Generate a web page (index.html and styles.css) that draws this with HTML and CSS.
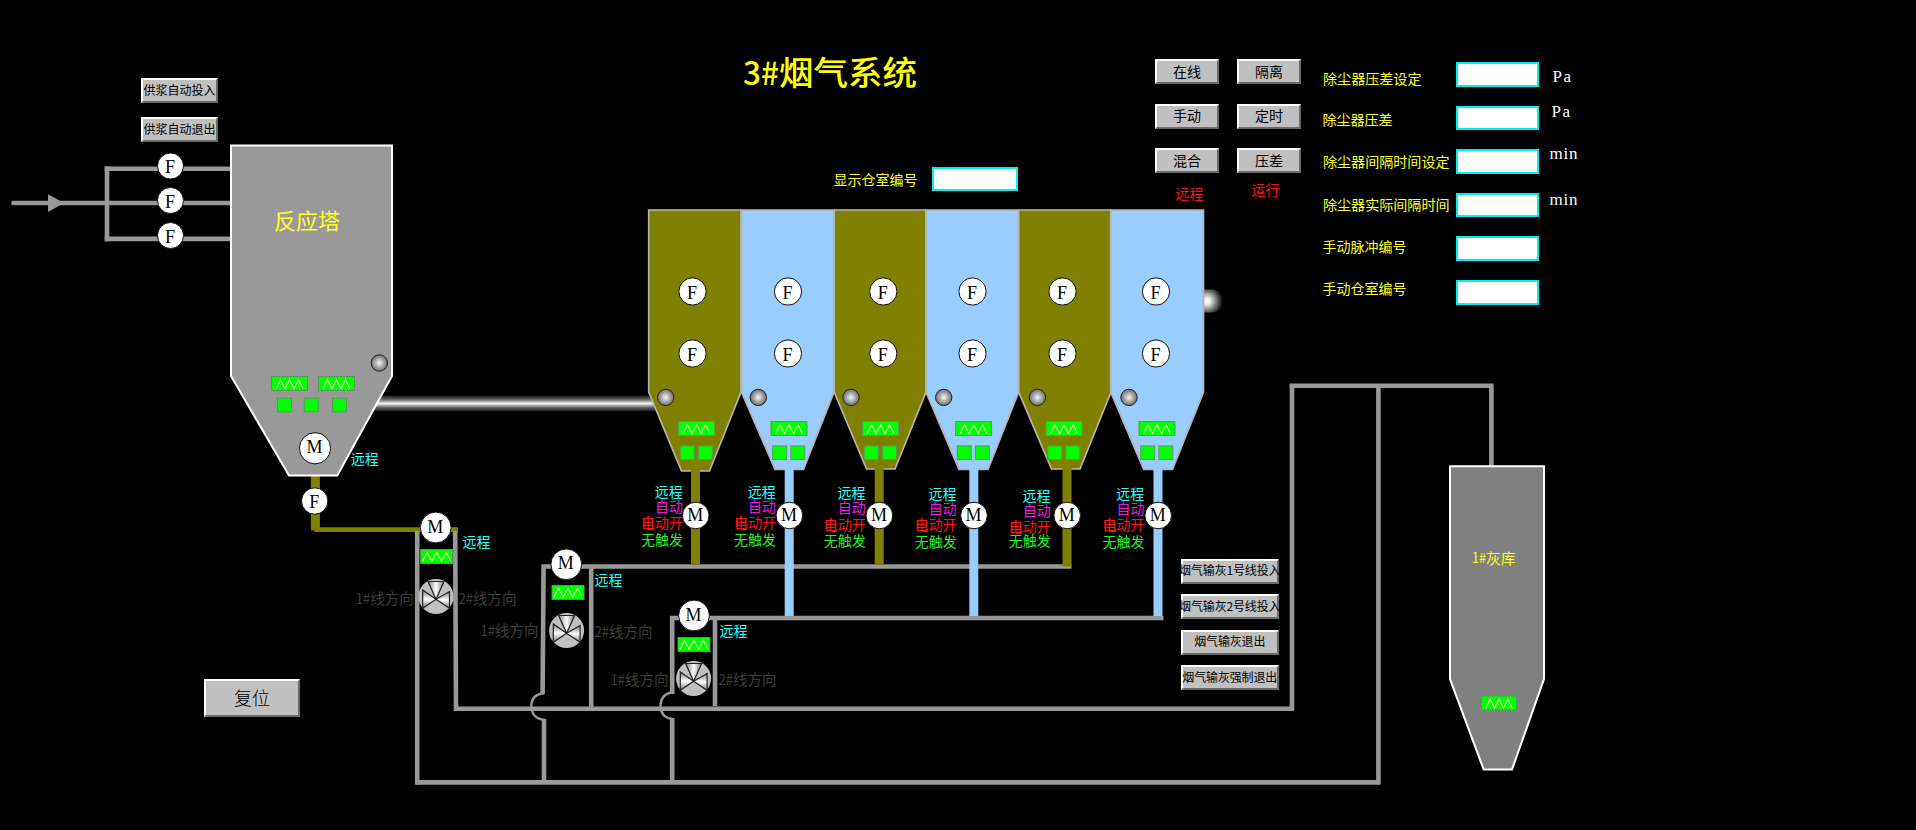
FILE: index.html
```
<!DOCTYPE html>
<html lang="zh-CN">
<head>
<meta charset="utf-8">
<title>3#烟气系统</title>
<link rel="stylesheet" href="styles.css">
</head>
<body>
<main class="mimic">
<svg class="diagram" viewBox="0 0 1916 830" width="1916" height="830">
  <defs>
    <linearGradient id="duct" x1="0" y1="0" x2="0" y2="1">
      <stop offset="0" stop-color="#111"/><stop offset=".25" stop-color="#666"/><stop offset=".5" stop-color="#f4f4f4"/><stop offset=".75" stop-color="#666"/><stop offset="1" stop-color="#111"/>
    </linearGradient>
    <radialGradient id="ball"><stop offset="0" stop-color="#f4f4f4"/><stop offset="1" stop-color="#6c6c6c"/></radialGradient>
    <radialGradient id="outlet" gradientUnits="userSpaceOnUse" cx="1207" cy="301" r="16">
      <stop offset="0" stop-color="#fff"/><stop offset=".2" stop-color="#eee"/><stop offset="1" stop-color="#000"/>
    </radialGradient>
    <linearGradient id="bladeH"><stop offset="0" stop-color="#777"/><stop offset=".5" stop-color="#fff"/><stop offset="1" stop-color="#777"/></linearGradient>
    <linearGradient id="bladeV" x1="0" y1="0" x2="0" y2="1"><stop offset="0" stop-color="#777"/><stop offset=".5" stop-color="#fff"/><stop offset="1" stop-color="#777"/></linearGradient>
    <g id="ballMark"><circle r="8.2" fill="url(#ball)" stroke="#222"/></g>
    <g id="wave"><rect x="-18" y="-7" width="36" height="14" class="lamp"/><path class="zig" d="M-13.5 5.2L-9 -3.8L-4.5 5.2L0 -3.8L4.5 5.2L9 -3.8L13.5 5.2"/></g>
    <g id="waveSmall"><rect x="-16" y="-7" width="32" height="14" class="lamp"/><path class="zig" d="M-14 4.5L-9.5 -4L-4.8 4.5L0 -4L4.8 4.5L9.5 -4L14 4.5"/></g>
    <g id="sq"><rect x="-7" y="-6.8" width="14" height="13.6" class="lamp"/></g>
    <g id="valve">
      <circle r="17.5" fill="#c0c0c0"/>
      <path d="M-8 -15H8L0 2.7Z" fill="url(#bladeH)" class="blade"/>
      <path d="M-13.3 -6.5V11.8L0 2.7Z" fill="url(#bladeV)" class="blade"/>
      <path d="M13.5 -5V11.8L0 2.7Z" fill="url(#bladeV)" class="blade"/>
    </g>
  </defs>

  <!-- slurry inlet -->
  <g class="pipe">
    <path d="M11.5 203H231M107 166.2V241.4M104.5 168.7H231M104.5 238.9H231"/>
  </g>
  <path d="M48 194.3L64 203L48 212Z" fill="#999"/>

  <!-- flue duct between tower and dust collector -->
  <rect x="365" y="395.5" width="300" height="16" fill="url(#duct)"/>

  <!-- ash conveying lines -->
  <g class="pipe olive"><path d="M314.500 529.6H458"/></g>
  <g class="pipe olive thick"><path d="M315.4 474V530.5"/></g>
  <g class="pipe">
    <path d="M417.2 531V784.4M455.2 531L456 710.8M454 708.8H1294"/>
    <path d="M541.5 566.5H1071.5M543.6 565L542.6 694M591.2 567V708M544 719V782M670 618H1163.5M672.2 616V694M715 618V706M672.2 718V782"/>
    <path d="M415.5 782.4H1380.6M1378.4 386V784.6M1289.5 385.7H1493.5M1292 384V710M1491.4 385V467"/>
  </g>
  <g class="hop"><path d="M544.5 693.3Q531.3 694 531.3 706.5Q532 719 544.5 719.7"/><path d="M672.7 692.3Q660.5 694 660.5 706.5Q661 718 673.5 719.2"/></g>

  <!-- reaction tower -->
  <path d="M231 145.5H392V376L337.3 475.6H289L231 376Z" fill="#999" stroke="#fff" stroke-width="2"/>
  <!-- ash silo -->
  <path d="M1450 466.2H1544V679L1512 769.6H1483.7L1450 679Z" fill="#808080" stroke="#fff" stroke-width="2"/>
  <!-- clean gas outlet -->
  <path d="M1203 289.5H1212Q1225 291 1225 301Q1225 311 1212 312.5H1203Z" fill="url(#outlet)"/>

  <g id="plant"></g>
</svg>

<button class="btn tiny feed-on">供浆自动投入</button>
<button class="btn tiny feed-off">供浆自动退出</button>
<button class="btn reset">复位</button>
<input class="field chamber" aria-label="显示仓室编号">

<section class="modes">
  <button class="btn">在线</button><button class="btn">隔离</button>
  <button class="btn">手动</button><button class="btn">定时</button>
  <button class="btn">混合</button><button class="btn">压差</button>
</section>

<section class="fields">
  <input class="field"><input class="field"><input class="field"><input class="field"><input class="field"><input class="field">
</section>

<section class="ash">
  <button class="btn tiny">烟气输灰1号线投入</button>
  <button class="btn tiny">烟气输灰2号线投入</button>
  <button class="btn tiny">烟气输灰退出</button>
  <button class="btn tiny">烟气输灰强制退出</button>
</section>
</main>
<script src="plant.js"></script>
</body>
</html>
```
FILE: styles.css
```
body {
  margin: 0;
  background: #000;
  overflow: hidden;
  font-family: "Noto Sans CJK SC", sans-serif;
}
.mimic { position: relative; width: 1916px; height: 830px; }
.diagram { display: block; }

.pipe { fill: none; stroke: #999; stroke-width: 4.6; }
.pipe.olive { stroke: #808000; }
.pipe.thick { stroke-width: 9; }
.hop { fill: none; stroke: #999; stroke-width: 2.4; }
.lamp { fill: #0f0; stroke: #5a9a5a; stroke-width: 1; }
.zig { fill: none; stroke: #d8ffb0; stroke-width: 1.1; }
.blade { stroke: #222; stroke-width: 1.2; }
.disc { fill: #fff; stroke: #111; stroke-width: 1; }
.letter { font-family: "Liberation Serif", serif; font-size: 18px; text-anchor: middle; fill: #000; }
.unit { font-family: "Liberation Serif", serif; font-size: 17px; fill: #fff; }
.cn { font-family: "Noto Sans CJK SC", sans-serif; font-weight: 400; }
.title { font-weight: 500; fill: #ff0; }
.yellow { fill: #ffff28; }
.cyan { fill: #2ff; }
.magenta { fill: #e81ee8; }
.red { fill: #ff1414; }
.green { fill: #28f028; }
.dim { fill: #3e3e3e; }

.btn {
  box-sizing: border-box;
  margin: 0;
  padding: 0 0 2px;
  border: 2px solid;
  border-color: #fff #6a6a6a #6a6a6a #fff;
  background: #c0c0c0;
  color: #000;
  font: 400 14px/1 "Noto Sans CJK SC", sans-serif;
  white-space: nowrap;
  display: flex;
  align-items: center;
  justify-content: center;
}
.tiny { font-size: 12px; }
.feed-on, .feed-off, .reset, .chamber { position: absolute; }
.feed-on, .feed-off { left: 141px; width: 77px; height: 25px; }
.feed-on { top: 78px; }
.feed-off { top: 117px; }
.reset { left: 204px; top: 679px; width: 96px; height: 38px; font-size: 18px; font-weight: 300; }

.field {
  box-sizing: border-box;
  width: 83px;
  height: 24.6px;
  margin: 0;
  padding: 0 4px;
  border: 2px solid #00f0f0;
  background: #fff;
}
.chamber { left: 932px; top: 167px; width: 86px; height: 24px; }

.modes, .fields, .ash { position: absolute; }
.modes {
  left: 1155px;
  top: 59px;
  display: grid;
  grid-template-columns: 64px 64px;
  grid-auto-rows: 25px;
  gap: 19.5px 18px;
}
.fields {
  left: 1456px;
  top: 62px;
  display: flex;
  flex-direction: column;
  gap: 19px;
}
.ash {
  left: 1181px;
  top: 558.5px;
  display: grid;
  grid-template-columns: 97.5px;
  grid-auto-rows: 25px;
  gap: 10.6px;
}
.ash .btn { letter-spacing: -0.15px; }
```
FILE: plant.js
```
const out = [];
const use = (id, x, y, sx = 1) => out.push(`<use href="#${id}" transform="translate(${x} ${y}) scale(${sx} 1)"/>`);
const disc = (x, y, r, letter) => out.push(
  `<circle class="disc" cx="${x}" cy="${y}" r="${r}"/>` +
  `<text class="letter" x="${x - 0.5}" y="${y + (letter === 'F' ? 7 : 5)}">${letter}</text>`);
// text placed by its left edge, vertical centre and total width
const label = (s, x, cy, w, size, cls) => out.push(
  `<text class="cn ${cls}" x="${x}" y="${cy + size * 0.34}" font-size="${size}" textLength="${w}" lengthAdjust="spacingAndGlyphs">${s}</text>`);

// title and tower
label('3#', 743, 74, 36, 32, 'title');
label('烟气系统', 779, 73.5, 138, 33, 'title');
label('反应塔', 274, 221.5, 66, 22, 'yellow');
label('显示仓室编号', 833.5, 180, 84, 14, 'yellow');
label('1#', 1472, 558.5, 14, 14, 'yellow');
label('灰库', 1486, 558.5, 29.5, 15, 'yellow');
[166, 200.5, 235.5].forEach(y => disc(170.5, y, 13, 'F'));
use('ballMark', 379.3, 363);
use('wave', 289.5, 383.5);
use('wave', 336.5, 383.5);
[284.5, 311.3, 339.4].forEach(x => use('sq', x, 405));
disc(315, 448.3, 15.6, 'M');
disc(314.7, 501, 13.2, 'F');
label('远程', 350.7, 459, 28, 14, 'cyan');
use('wave', 1499, 703, 0.98);

// two-way diverter stations
[
  { m: [435.7, 527.5], wave: [436.7, 556.5], valve: [436, 596.5], remote: [462.5, 542], one: [355.7, 599.5], two: [458.5, 599.5] },
  { m: [566.3, 564.3], wave: [568, 592.5], valve: [566.6, 630.5], remote: [594.5, 580], one: [480.5, 631.5], two: [594.5, 632.3] },
  { m: [694, 615.5], wave: [694, 644.5], valve: [693.6, 678.5], remote: [719.5, 631], one: [610.5, 680.5], two: [718.5, 680.5] }
].forEach(s => {
  label('1#', s.one[0], s.one[1], 14.5, 14.4, 'dim');
  label('线方向', s.one[0] + 14.5, s.one[1], 43.5, 14.5, 'dim');
  label('2#', s.two[0], s.two[1], 14.5, 14.4, 'dim');
  label('线方向', s.two[0] + 14.5, s.two[1], 43.5, 14.5, 'dim');
  use('waveSmall', ...s.wave);
  use('valve', ...s.valve);
  disc(...s.m, 15.4, 'M');
  label('远程', ...s.remote, 28, 14, 'cyan');
});

// dust collector chambers
const O = '#808000', B = '#99ccff';
[
  { l: 648.7, r: 741, b: [681.5, 709.5], y: 471, c: O, f: 692.5, ball: 665.7, w: 696.5, p: 695.5, t: 655, ty: 0 },
  { l: 741.5, r: 834, b: [775, 803.5], y: 469.5, c: B, f: 788, ball: 758.3, w: 789, p: 789.2, t: 748, ty: 0 },
  { l: 834.2, r: 926, b: [866.5, 895], y: 469, c: O, f: 883.3, ball: 851, w: 880.6, p: 879.2, t: 837.7, ty: 1.2 },
  { l: 926, r: 1018.7, b: [959, 988], y: 469.5, c: B, f: 972.5, ball: 943.7, w: 973.6, p: 973.8, t: 928.7, ty: 2 },
  { l: 1018.7, r: 1111, b: [1051.5, 1080], y: 469, c: O, f: 1062.5, ball: 1037.4, w: 1064, p: 1067, t: 1022.7, ty: 4 },
  { l: 1110.7, r: 1203.5, b: [1143.7, 1172.5], y: 469.5, c: B, f: 1156, ball: 1129, w: 1157, p: 1158, t: 1116.5, ty: 2 }
].forEach((h, i) => {
  const end = h.c === O ? (i === 4 ? 566.5 : 564.5) : 616;
  out.push(`<path d="M${h.l} 210H${h.r}V392L${h.b[1]} ${h.y}H${h.b[0]}L${h.l} 392Z" fill="${h.c}" stroke="#b9b2b2" stroke-width="1.7"/>`);
  out.push(`<rect x="${h.p - 4.5}" y="${h.y - 1}" width="9" height="${end - h.y + 1}" fill="${h.c}"/>`);
  disc(h.f, 291.5, 13.6, 'F');
  disc(h.f, 353.5, 13.6, 'F');
  use('ballMark', h.ball, 397.4);
  use('wave', h.w, 428.5);
  use('sq', h.w - 9.3, 452.7);
  use('sq', h.w + 8.8, 452.7);
  label('远程', h.t - 0.3, 492 + h.ty, 28, 14, 'cyan');
  label('自动', h.t, 507.5 + h.ty, 28, 14, 'magenta');
  label('电动开', h.t - 14, 523.7 + h.ty, 42, 14, 'red');
  label('自', h.t - 14, 523.7 + h.ty, 14, 14, 'red');
  label('无触发', h.t - 14, 540.5 + (i === 4 ? 1 : h.ty), 42, 14, 'green');
  disc(h.p + 0.2, 515.5, 13.3, 'M');
});

// operating parameters
label('除尘器压差设定', 1323, 79, 98.5, 14, 'yellow');
label('除尘器压差', 1322.5, 120.5, 70, 14, 'yellow');
label('除尘器间隔时间设定', 1323, 162.7, 126.5, 14, 'yellow');
label('除尘器实际间隔时间', 1323, 205.7, 126.5, 14, 'yellow');
label('手动脉冲编号', 1322.5, 247.5, 84, 14, 'yellow');
label('手动仓室编号', 1322.5, 289.3, 84, 14, 'yellow');
label('远程', 1175.5, 194, 28, 14, 'red');
label('运行', 1251.5, 190.7, 28, 14, 'red');
[['Pa', 1552.5, 82.3, 18.5], ['Pa', 1551.5, 117.3, 18.5], ['min', 1549.5, 159, 28], ['min', 1549.5, 205, 28]].forEach(([s, x, y, w]) =>
  out.push(`<text class="unit" x="${x}" y="${y}" textLength="${w}">${s}</text>`));

document.getElementById('plant').innerHTML = out.join('');
```
